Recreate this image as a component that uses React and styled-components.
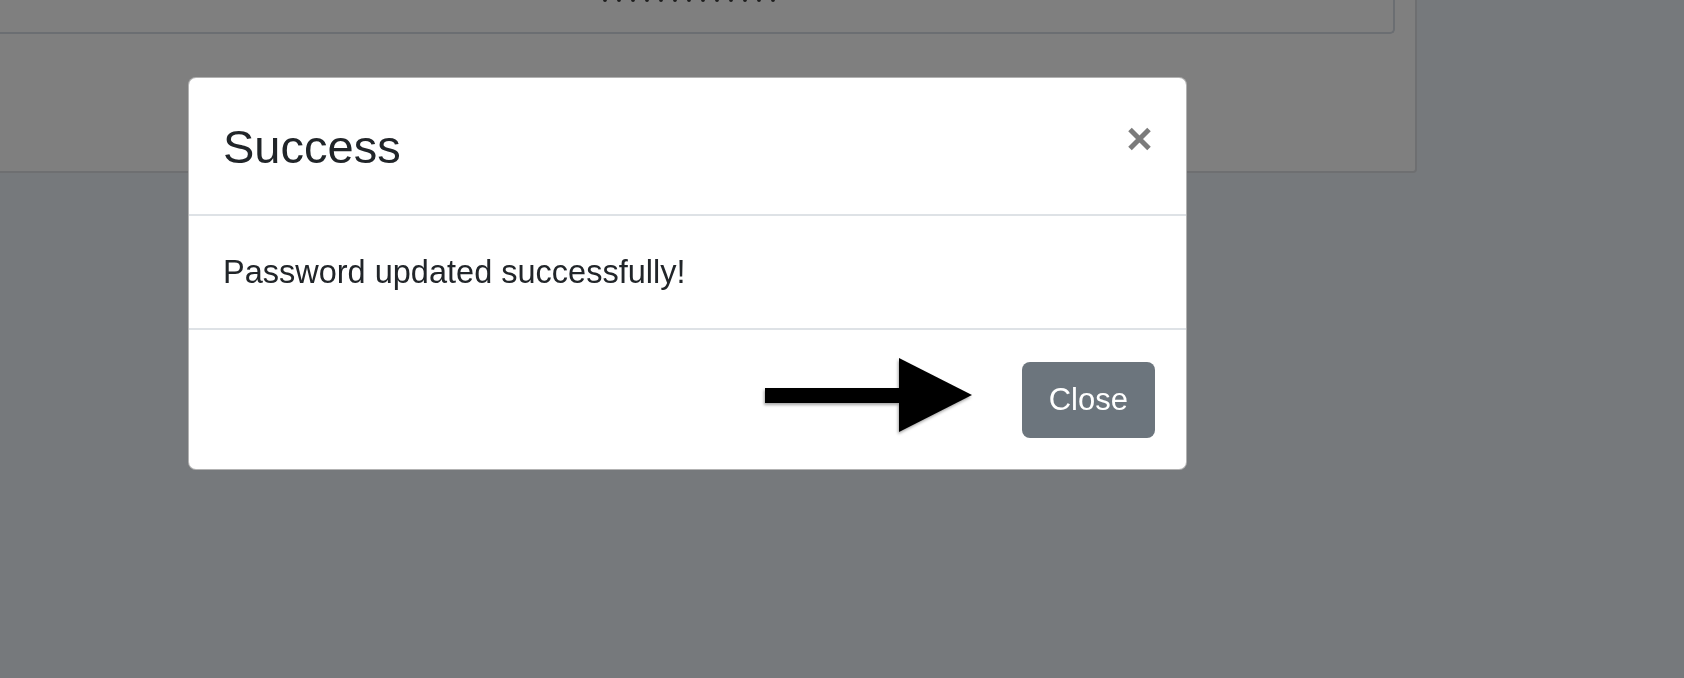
import React from "react";
import styled, { createGlobalStyle } from "styled-components";

const GlobalStyle = createGlobalStyle`
  html, body {
    margin: 0;
    padding: 0;
    background-color: #ecf2f8;
    font-family: "Liberation Sans", Arial, sans-serif;
    overflow: hidden;
  }
`;

const Page = styled.div`
  width: 1684px;
  height: 678px;
  padding-top: 1px;
  box-sizing: border-box;
`;

const Panel = styled.div`
  margin-top: -41px;
  margin-left: -40px;
  width: 1457px;
  box-sizing: border-box;
  background-color: #ffffff;
  border: 2px solid #dcdee2;
  border-radius: 4px;
  padding: 0 20px 18px 20px;
`;

const FieldBox = styled.div`
  border: 2px solid #d6dce4;
  border-top: none;
  border-radius: 0 0 5px 5px;
  padding: 35px 0 30px;
  display: flex;
  justify-content: center;
  gap: 10px;
`;

const Dot = styled.span`
  width: 4px;
  height: 5px;
  border-radius: 50%;
  background-color: #3a3a3a;
`;

const ButtonRow = styled.div`
  margin-top: 43px;
  display: flex;
  justify-content: center;
  gap: 73px;
`;

const PanelButton = styled.div`
  width: ${(p) => p.$w}px;
  height: 76px;
  border-radius: 8px;
  background-color: ${(p) => p.$bg};
`;

const Backdrop = styled.div`
  position: fixed;
  inset: 0;
  background-color: rgba(0, 0, 0, 0.5);
`;

const Modal = styled.div`
  position: fixed;
  top: 77px;
  left: 188px;
  width: 999px;
  box-sizing: border-box;
  background-color: #ffffff;
  border: 1px solid rgba(0, 0, 0, 0.3);
  border-radius: 8px;
  color: #212529;
`;

const ModalHeader = styled.div`
  display: flex;
  align-items: flex-start;
  justify-content: space-between;
  padding: 34px 34px 32px 34px;
  border-bottom: 2px solid #dee2e6;
`;

const Title = styled.h5`
  margin: 0;
  font-size: 47px;
  font-weight: 400;
  line-height: 70px;
`;

const CloseX = styled.button`
  margin-top: 15px;
  padding: 0;
  border: none;
  background: transparent;
  width: 25px;
  height: 24px;
  display: flex;
  cursor: pointer;
`;

const ModalBody = styled.div`
  padding: 32px 34px 31px 34px;
  font-size: 32.5px;
  line-height: 49px;
  border-bottom: 2px solid #dee2e6;
`;

const ModalFooter = styled.div`
  display: flex;
  align-items: center;
  justify-content: flex-end;
  gap: 50px;
  padding: 32px 31px 31px 31px;
`;

const Arrow = styled.svg`
  margin-top: -10px;
  filter: drop-shadow(-1px 2px 1.5px rgba(0, 0, 0, 0.35));
`;

const CloseButton = styled.button`
  height: 76px;
  padding: 0 27px;
  border: none;
  border-radius: 8px;
  background-color: #6c757d;
  color: #ffffff;
  font-family: "Liberation Sans", Arial, sans-serif;
  font-size: 31px;
  cursor: pointer;
`;

const App = () => {
  return (
    <Page>
      <GlobalStyle />
      <Panel>
        <FieldBox>
          {Array.from({ length: 13 }).map((_, i) => (
            <Dot key={i} />
          ))}
        </FieldBox>
        <ButtonRow>
          <PanelButton $w={149} $bg="#f58a2e" />
          <PanelButton $w={145} $bg="#4f9a62" />
        </ButtonRow>
      </Panel>
      <Backdrop />
      <Modal>
        <ModalHeader>
          <Title>Success</Title>
          <CloseX aria-label="Close">
            <svg width="25" height="24" viewBox="0 0 25 24">
              <path
                d="M3 2.5 L22 21.5 M22 2.5 L3 21.5"
                stroke="#7b7b7b"
                strokeWidth="5"
                strokeLinecap="butt"
              />
            </svg>
          </CloseX>
        </ModalHeader>
        <ModalBody>Password updated successfully!</ModalBody>
        <ModalFooter>
          <Arrow width="207" height="74" viewBox="0 0 207 74">
            <rect x="0" y="30" width="136" height="15" fill="#000" />
            <polygon points="134,0 207,37 134,74" fill="#000" />
          </Arrow>
          <CloseButton>Close</CloseButton>
        </ModalFooter>
      </Modal>
    </Page>
  );
};

export default App;
